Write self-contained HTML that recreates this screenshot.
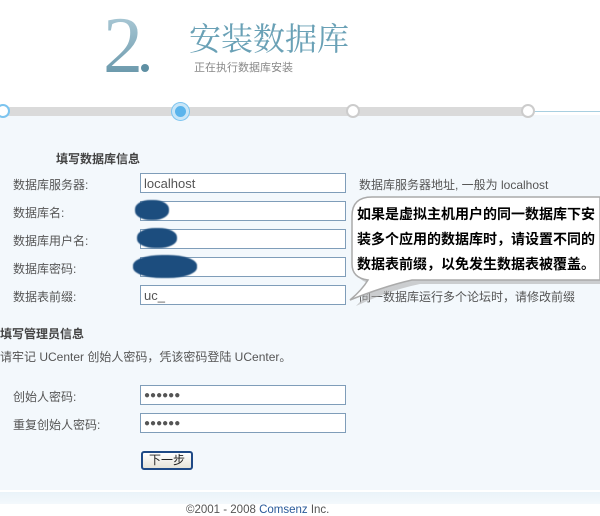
<!DOCTYPE html>
<html><head><meta charset="utf-8"><style>
*{margin:0;padding:0;box-sizing:border-box}
body{width:600px;height:516px;background:#fff;position:relative;overflow:hidden;font-family:"Liberation Sans","Noto Sans CJK SC",sans-serif;font-size:12px;color:#555}
.a{position:absolute;white-space:nowrap}
.inp{position:absolute;left:140px;width:206px;height:20px;border:1px solid #7f9db9;background:#fff;font-size:13px;color:#555;padding:2px 3px;line-height:15px}
.lbl{position:absolute;left:13px;font-size:12px;color:#555}
.blob{position:absolute;background:#1c4d7e;border-radius:45%;filter:blur(.6px)}
</style></head><body>
<div class="a" style="left:0;top:115px;width:600px;height:375px;background:#f3f8fc"></div>
<div class="a" style="left:0;top:492px;width:600px;height:12px;background:linear-gradient(#eaf3f9,#f3f8fc)"></div>
<div class="a" style="left:103px;top:6px;font-family:'Liberation Serif',serif;font-size:80px;line-height:80px;color:#7aa6b8;background:linear-gradient(#b4d0dc,#5e8fa3);-webkit-background-clip:text;background-clip:text;-webkit-text-fill-color:transparent">2</div>
<div class="a" style="left:141px;top:64px;width:8px;height:8px;border-radius:50%;background:#5e8fa3"></div>
<div class="a" style="left:189px;top:17px;font-family:'Noto Serif CJK SC',serif;font-size:32px;line-height:40px;color:#6aa1b6">安装数据库</div>
<div class="a" style="left:194px;top:59px;font-size:11px;color:#888">正在执行数据库安装</div>
<div class="a" style="left:0;top:107px;width:528px;height:9px;background:#dadada"></div>
<div class="a" style="left:528px;top:111px;width:72px;height:1px;background:#a8cfe0"></div>
<div class="a" style="left:-4px;top:104px;width:14px;height:14px;border-radius:50%;background:#fff;border:2px solid #7cc4ef"></div>
<div class="a" style="left:172px;top:103px;width:17px;height:17px;border-radius:50%;background:#5ab4ec;border:3px solid #c8e6f8;box-shadow:0 0 0 1px #7cc4ef"></div>
<div class="a" style="left:346px;top:104px;width:14px;height:14px;border-radius:50%;background:#fff;border:2px solid #ccc"></div>
<div class="a" style="left:521px;top:104px;width:14px;height:14px;border-radius:50%;background:#fff;border:2px solid #ccc"></div>

<div class="a" style="left:56px;top:150px;font-weight:bold;color:#444">填写数据库信息</div>
<div class="lbl" style="top:176px">数据库服务器:</div>
<div class="lbl" style="top:204px">数据库名:</div>
<div class="lbl" style="top:232px">数据库用户名:</div>
<div class="lbl" style="top:260px">数据库密码:</div>
<div class="lbl" style="top:288px">数据表前缀:</div>
<div class="inp" style="top:173px">localhost</div>
<div class="inp" style="top:201px"></div>
<div class="inp" style="top:229px"></div>
<div class="inp" style="top:257px"></div>
<div class="inp" style="top:285px">uc_</div>
<div class="blob" style="left:135px;top:200px;width:34px;height:20px"></div>
<div class="blob" style="left:137px;top:228px;width:40px;height:20px"></div>
<div class="blob" style="left:133px;top:255px;width:64px;height:23px"></div>
<div class="a" style="left:359px;top:176px;color:#555">数据库服务器地址, 一般为 localhost</div>
<div class="a" style="left:359px;top:288px;color:#555">同一数据库运行多个论坛时，请修改前缀</div>
<svg class="a" style="left:300px;top:190px" width="300" height="125">
<path d="M56 30 Q56 11 76 11 L300 11 L300 94 L120 94 Q90 100 56 116 Q68 104 74 94 L74 94 Q56 92 56 78 Z" fill="#aaa" opacity=".55"/>
<path d="M52 26 Q52 7 72 7 L300 7 L300 90 L112 90 Q85 96 50 110 Q62 100 68 90 Q52 88 52 74 Z" fill="#fff" stroke="#aaa" stroke-width="1.5"/>
</svg>
<div class="a" style="left:357px;top:202px;font-weight:bold;color:#000;font-size:14px;line-height:25px;white-space:normal;width:244px;word-break:break-all">如果是虚拟主机用户的同一数据库下安装多个应用的数据库时，请设置不同的数据表前缀，以免发生数据表被覆盖。</div>

<div class="a" style="left:0;top:325px;font-weight:bold;color:#444">填写管理员信息</div>
<div class="a" style="left:0;top:348px;color:#555">请牢记 UCenter 创始人密码，凭该密码登陆 UCenter。</div>
<div class="lbl" style="top:388px">创始人密码:</div>
<div class="lbl" style="top:416px">重复创始人密码:</div>
<div class="inp" style="top:385px;font-size:10px;color:#555">●●●●●●</div>
<div class="inp" style="top:413px;font-size:10px;color:#555">●●●●●●</div>
<div class="a" style="left:141px;top:451px;width:52px;height:19px;border:2px solid #1f4a86;border-radius:3px;background:linear-gradient(#fff,#e6e3d8);text-align:center;font-size:12px;line-height:14px;color:#222">下一步</div>
<div class="a" style="left:186px;top:504px;color:#555;font-size:11.5px">©2001 - 2008 <span style="color:#2a5a9a">Comsenz</span> Inc.</div>
</body></html>
